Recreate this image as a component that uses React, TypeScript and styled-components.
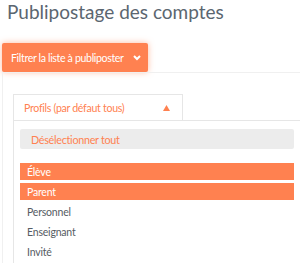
import React from "react";
import styled, { createGlobalStyle } from "styled-components";

const Global = createGlobalStyle`
  html, body { margin: 0; padding: 0; background: #fff; }
  body { font-family: Lato, "Open Sans", sans-serif; overflow: hidden; }
`;

const ORANGE = "#ff8150";

const Page = styled.div`
  width: 300px;
  height: 264px;
  overflow: hidden;
  box-sizing: border-box;
`;

const Title = styled.h1`
  margin: 0 0 0 7px;
  font-size: 19px;
  font-weight: 400;
  line-height: 24px;
  color: #5b6670;
`;

const FilterButton = styled.button`
  margin: 19px 0 0 2px;
  width: 146px;
  height: 29px;
  border: none;
  border-radius: 2px;
  background: ${ORANGE};
  color: #fff;
  font-family: Lato, sans-serif;
  font-size: 10.6px;
  letter-spacing: -0.35px;
  white-space: nowrap;
  display: flex;
  align-items: center;
  gap: 9px;
  padding: 0 0 0 9px;
  box-shadow: 0 0 6px rgba(255, 129, 80, 0.55);
  cursor: pointer;
`;

const Panel = styled.div`
  border-left: 1px solid #f0f0f0;
  border-top: 1px solid #f0f0f0;
  margin-left: 2px;
  padding: 21px 0 0 10px;
`;

const Tab = styled.div`
  width: 170px;
  height: 26px;
  border: 1px solid #e6e6e6;
  border-bottom: none;
  display: flex;
  align-items: center;
  justify-content: space-between;
  padding: 0 12px 0 10px;
  box-sizing: border-box;
  color: ${ORANGE};
  font-size: 10.6px;
  letter-spacing: -0.3px;
`;

const TabBody = styled.div`
  border-left: 1px solid #e6e6e6;
  border-top: 1px solid #e6e6e6;
  padding: 8px 6px 0 6px;
  display: flex;
  flex-direction: column;
`;

const ClearButton = styled.div`
  height: 20px;
  background: #ececec;
  border-radius: 2px;
  color: ${ORANGE};
  font-size: 10.8px;
  letter-spacing: -0.3px;
  display: flex;
  align-items: center;
  padding-left: 11px;
  margin-bottom: 14px;
`;

const Option = styled.div<{ $selected?: boolean }>`
  height: 17px;
  margin-bottom: 3px;
  display: flex;
  align-items: center;
  padding-left: 7px;
  font-size: 10.5px;
  letter-spacing: -0.2px;
  background: ${(p) => (p.$selected ? ORANGE : "transparent")};
  color: ${(p) => (p.$selected ? "#fff" : "#555c63")};
`;

const options = [
  { label: "Élève", selected: true },
  { label: "Parent", selected: true },
  { label: "Personnel", selected: false },
  { label: "Enseignant", selected: false },
  { label: "Invité", selected: false },
];

export default function App() {
  return (
    <Page>
      <Global />
      <Title>Publipostage des comptes</Title>
      <FilterButton>
        Filtrer la liste à publiposter
        <svg width="8" height="6" viewBox="0 0 8 6">
          <path d="M1 1 L4 4 L7 1" stroke="#fff" strokeWidth="2" fill="none" />
        </svg>
      </FilterButton>
      <Panel>
        <Tab>
          <span>Profils (par défaut tous)</span>
          <svg width="7" height="6" viewBox="0 0 7 6">
            <path d="M3.5 0 L7 6 L0 6 Z" fill={ORANGE} />
          </svg>
        </Tab>
        <TabBody>
          <ClearButton>Désélectionner tout</ClearButton>
          {options.map((o) => (
            <Option key={o.label} $selected={o.selected}>
              {o.label}
            </Option>
          ))}
        </TabBody>
      </Panel>
    </Page>
  );
}
